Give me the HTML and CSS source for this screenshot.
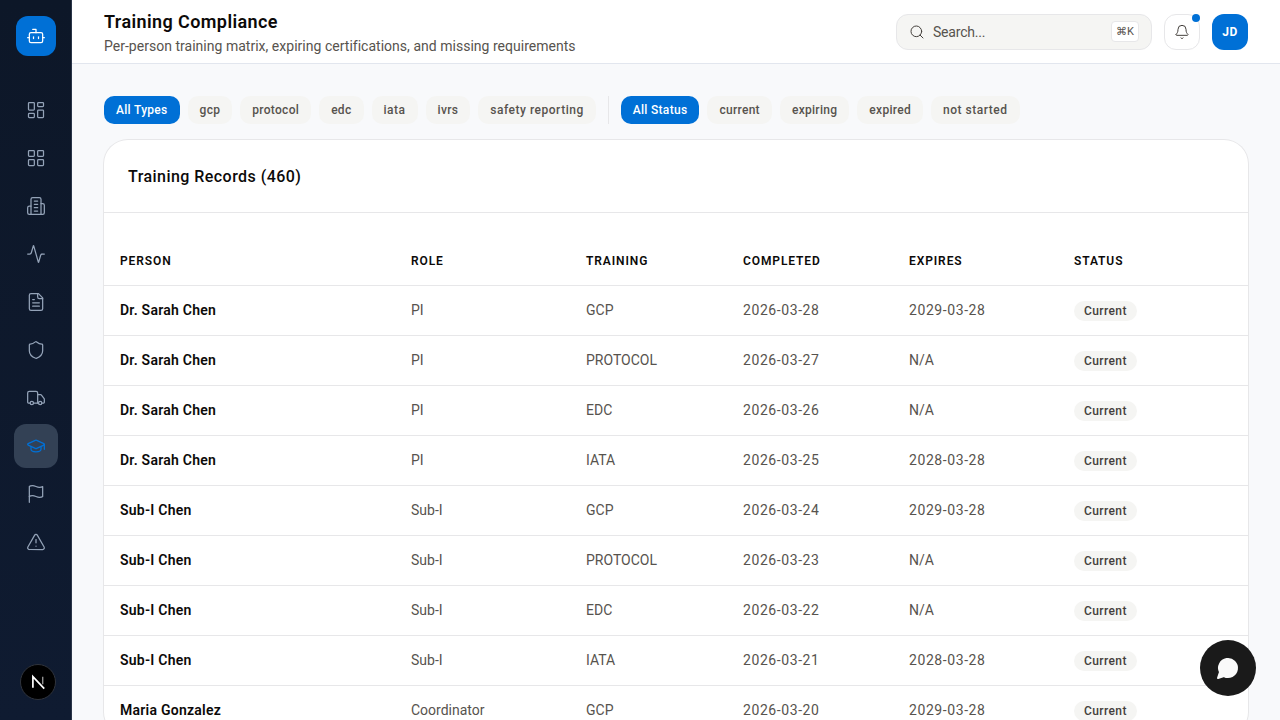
FILE: index.html
```html
<!DOCTYPE html>
<html lang="en">
<head>
    <meta charset="UTF-8">
    <meta name="viewport" content="width=device-width, initial-scale=1.0">
    <title>Training Compliance</title>
    <link rel="stylesheet" href="styles.css">
</head>
<body>
    <div class="app">
        <aside class="sidebar">
            <div class="logo">
                <svg class="icon" viewBox="0 0 24 24"><path d="M12 8V4H8"/><rect width="16" height="12" x="4" y="8" rx="2"/><path d="M2 14h2"/><path d="M20 14h2"/><path d="M15 13v2"/><path d="M9 13v2"/></svg>
            </div>
            <nav class="nav">
                <a class="nav-item"><svg class="icon" viewBox="0 0 24 24"><rect width="7" height="9" x="3" y="3" rx="1"/><rect width="7" height="5" x="14" y="3" rx="1"/><rect width="7" height="9" x="14" y="12" rx="1"/><rect width="7" height="5" x="3" y="16" rx="1"/></svg></a>
                <a class="nav-item"><svg class="icon" viewBox="0 0 24 24"><rect width="7" height="7" x="3" y="3" rx="1"/><rect width="7" height="7" x="14" y="3" rx="1"/><rect width="7" height="7" x="14" y="14" rx="1"/><rect width="7" height="7" x="3" y="14" rx="1"/></svg></a>
                <a class="nav-item"><svg class="icon" viewBox="0 0 24 24"><path d="M6 22V4a2 2 0 0 1 2-2h8a2 2 0 0 1 2 2v18Z"/><path d="M6 12H4a2 2 0 0 0-2 2v6a2 2 0 0 0 2 2h2"/><path d="M18 9h2a2 2 0 0 1 2 2v9a2 2 0 0 1-2 2h-2"/><path d="M10 6h4"/><path d="M10 10h4"/><path d="M10 14h4"/><path d="M10 18h4"/></svg></a>
                <a class="nav-item"><svg class="icon" viewBox="0 0 24 24"><path d="M22 12h-2.48a2 2 0 0 0-1.93 1.46l-2.35 8.36a.25.25 0 0 1-.48 0L9.24 2.18a.25.25 0 0 0-.48 0l-2.35 8.36A2 2 0 0 1 4.49 12H2"/></svg></a>
                <a class="nav-item"><svg class="icon" viewBox="0 0 24 24"><path d="M15 2H6a2 2 0 0 0-2 2v16a2 2 0 0 0 2 2h12a2 2 0 0 0 2-2V7Z"/><path d="M14 2v4a2 2 0 0 0 2 2h4"/><path d="M10 9H8"/><path d="M16 13H8"/><path d="M16 17H8"/></svg></a>
                <a class="nav-item"><svg class="icon" viewBox="0 0 24 24"><path d="M20 13c0 5-3.5 7.5-7.66 8.95a1 1 0 0 1-.67-.01C7.5 20.5 4 18 4 13V6a1 1 0 0 1 1-1c2 0 4.5-1.2 6.24-2.72a1.17 1.17 0 0 1 1.52 0C14.51 3.81 17 5 19 5a1 1 0 0 1 1 1z"/></svg></a>
                <a class="nav-item"><svg class="icon" viewBox="0 0 24 24"><path d="M14 18V6a2 2 0 0 0-2-2H4a2 2 0 0 0-2 2v11a1 1 0 0 0 1 1h2"/><path d="M15 18H9"/><path d="M19 18h2a1 1 0 0 0 1-1v-3.65a1 1 0 0 0-.22-.624l-3.48-4.35A1 1 0 0 0 17.52 8H14"/><circle cx="17" cy="18" r="2"/><circle cx="7" cy="18" r="2"/></svg></a>
                <a class="nav-item active"><svg class="icon" viewBox="0 0 24 24"><path d="M21.42 10.922a1 1 0 0 0-.019-1.838L12.83 5.18a2 2 0 0 0-1.66 0L2.6 9.08a1 1 0 0 0 0 1.832l8.57 3.908a2 2 0 0 0 1.66 0z"/><path d="M22 10v6"/><path d="M6 12.5V16a6 3 0 0 0 12 0v-3.5"/></svg></a>
                <a class="nav-item"><svg class="icon" viewBox="0 0 24 24"><path d="M4 15s1-1 4-1 5 2 8 2 4-1 4-1V3s-1 1-4 1-5-2-8-2-4 1-4 1z"/><path d="M4 22v-7"/></svg></a>
                <a class="nav-item"><svg class="icon" viewBox="0 0 24 24"><path d="m21.73 18-8-14a2 2 0 0 0-3.48 0l-8 14A2 2 0 0 0 4 21h16a2 2 0 0 0 1.73-3"/><path d="M12 9v4"/><path d="M12 17h.01"/></svg></a>
            </nav>
        </aside>

        <div class="main">
            <header class="header">
                <div class="header-text">
                    <h1>Training Compliance</h1>
                    <p>Per-person training matrix, expiring certifications, and missing requirements</p>
                </div>
                <div class="header-actions">
                    <div class="search">
                        <svg class="icon" viewBox="0 0 24 24"><path d="m21 21-4.34-4.34"/><circle cx="11" cy="11" r="8"/></svg>
                        <span class="search-label">Search...</span>
                        <span class="kbd">⌘K</span>
                    </div>
                    <button class="bell-btn">
                        <svg class="icon" viewBox="0 0 24 24"><path d="M10.268 21a2 2 0 0 0 3.464 0"/><path d="M3.262 15.326A1 1 0 0 0 4 17h16a1 1 0 0 0 .74-1.673C19.41 13.956 18 12.499 18 8A6 6 0 0 0 6 8c0 4.499-1.411 5.956-2.738 7.326"/></svg>
                        <span class="bell-dot"></span>
                    </button>
                    <div class="avatar">JD</div>
                </div>
            </header>

            <main class="content">
                <div class="filters">
                    <button class="chip active">All Types</button>
                    <button class="chip">gcp</button>
                    <button class="chip">protocol</button>
                    <button class="chip">edc</button>
                    <button class="chip chip-wide">iata</button>
                    <button class="chip">ivrs</button>
                    <button class="chip chip-wide">safety reporting</button>
                    <span class="filter-divider"></span>
                    <button class="chip active">All Status</button>
                    <button class="chip">current</button>
                    <button class="chip">expiring</button>
                    <button class="chip">expired</button>
                    <button class="chip chip-wide">not started</button>
                </div>

                <section class="card">
                    <div class="card-header">
                        <h2>Training Records (460)</h2>
                    </div>
                    <div class="table-wrap">
                        <table class="records">
                            <colgroup>
                                <col class="col-person">
                                <col class="col-role">
                                <col class="col-training">
                                <col class="col-completed">
                                <col class="col-expires">
                                <col class="col-status">
                            </colgroup>
                            <thead>
                                <tr>
                                    <th>Person</th>
                                    <th>Role</th>
                                    <th>Training</th>
                                    <th>Completed</th>
                                    <th>Expires</th>
                                    <th>Status</th>
                                </tr>
                            </thead>
                            <tbody>
                                <tr><td class="person">Dr. Sarah Chen</td><td>PI</td><td>GCP</td><td class="date">2026-03-28</td><td class="date">2029-03-28</td><td><span class="pill">Current</span></td></tr>
                                <tr><td class="person">Dr. Sarah Chen</td><td>PI</td><td>PROTOCOL</td><td class="date">2026-03-27</td><td>N/A</td><td><span class="pill">Current</span></td></tr>
                                <tr><td class="person">Dr. Sarah Chen</td><td>PI</td><td>EDC</td><td class="date">2026-03-26</td><td>N/A</td><td><span class="pill">Current</span></td></tr>
                                <tr><td class="person">Dr. Sarah Chen</td><td>PI</td><td>IATA</td><td class="date">2026-03-25</td><td class="date">2028-03-28</td><td><span class="pill">Current</span></td></tr>
                                <tr><td class="person">Sub-I Chen</td><td>Sub-I</td><td>GCP</td><td class="date">2026-03-24</td><td class="date">2029-03-28</td><td><span class="pill">Current</span></td></tr>
                                <tr><td class="person">Sub-I Chen</td><td>Sub-I</td><td>PROTOCOL</td><td class="date">2026-03-23</td><td>N/A</td><td><span class="pill">Current</span></td></tr>
                                <tr><td class="person">Sub-I Chen</td><td>Sub-I</td><td>EDC</td><td class="date">2026-03-22</td><td>N/A</td><td><span class="pill">Current</span></td></tr>
                                <tr><td class="person">Sub-I Chen</td><td>Sub-I</td><td>IATA</td><td class="date">2026-03-21</td><td class="date">2028-03-28</td><td><span class="pill">Current</span></td></tr>
                                <tr><td class="person">Maria Gonzalez</td><td>Coordinator</td><td>GCP</td><td class="date">2026-03-20</td><td class="date">2029-03-28</td><td><span class="pill">Current</span></td></tr>
                            </tbody>
                        </table>
                    </div>
                </section>
            </main>
        </div>
    </div>

    <div class="next-badge">
        <svg viewBox="0 0 36 36" class="next-mark"><path d="M12.6 24V12.4L24.6 25"/><path class="next-stem" d="M23 12.4v8"/></svg>
    </div>

    <button class="chat-btn">
        <svg viewBox="0 0 24 24"><path d="M7.9 20A9 9 0 1 0 4 16.1L2 22Z"/></svg>
    </button>
</body>
</html>
```

FILE: styles.css
```css
:root {
    --primary: #0070d6;
    --border: #e7e7e9;
    --page: #f8f9fb;
    --chip: #f5f5f3;
    --text: #0c0a09;
    --muted: #57534e;
}

* {
    box-sizing: border-box;
}

html, body {
    height: 100%;
}

body {
    margin: 0;
    overflow: hidden;
    font-family: "Roboto", "Noto Sans", sans-serif;
    color: var(--text);
    background: var(--page);
}

.icon {
    width: 20px;
    height: 20px;
    fill: none;
    stroke: currentColor;
    stroke-width: 1.5;
    stroke-linecap: round;
    stroke-linejoin: round;
    flex-shrink: 0;
}

.app {
    display: flex;
    height: 100vh;
}

.sidebar {
    width: 72px;
    flex-shrink: 0;
    display: flex;
    flex-direction: column;
    align-items: center;
    padding-top: 16px;
    background: linear-gradient(180deg, #0d1728, #0f1b31);
    box-shadow: inset -1px 0 0 #2a3548;
}

.logo {
    width: 40px;
    height: 40px;
    border-radius: 12px;
    background: var(--primary);
    color: #fff;
    display: flex;
    align-items: center;
    justify-content: center;
    margin-bottom: 32px;
}

.nav {
    display: flex;
    flex-direction: column;
    gap: 4px;
}

.nav-item {
    width: 44px;
    height: 44px;
    border-radius: 12px;
    display: flex;
    align-items: center;
    justify-content: center;
    color: #94a3b8;
}

.nav-item.active {
    background: #334155;
    color: var(--primary);
}

/* dev indicator, sits over the sidebar */
.next-badge {
    position: fixed;
    left: 20px;
    bottom: 20px;
    width: 36px;
    height: 36px;
    border-radius: 50%;
    background: #000;
    border: 1px solid #30343c;
}

.next-mark {
    display: block;
    width: 34px;
    height: 34px;
    fill: none;
    stroke: #fff;
    stroke-width: 1.8;
}

.next-stem {
    stroke-width: 1.4;
    opacity: 0.6;
}

.main {
    flex-grow: 1;
    min-width: 0;
    display: flex;
    flex-direction: column;
}

.header {
    height: 64px;
    flex-shrink: 0;
    display: flex;
    align-items: center;
    justify-content: space-between;
    padding: 0 32px;
    background: #fff;
    border-bottom: 1px solid #e2e6ee;
}

.header h1 {
    margin: 0;
    font-size: 18px;
    line-height: 28px;
    font-weight: 600;
    letter-spacing: 0.4px;
}

.header p {
    margin: 0;
    font-size: 14px;
    line-height: 20px;
    letter-spacing: 0.02px;
    color: var(--muted);
}

.header-actions {
    display: flex;
    align-items: center;
    gap: 12px;
}

.search {
    width: 256px;
    height: 36px;
    display: flex;
    align-items: center;
    gap: 8px;
    padding: 0 12px;
    background: var(--chip);
    border: 1px solid var(--border);
    border-radius: 12px;
    color: var(--muted);
    font-size: 14px;
}

.search .icon {
    width: 16px;
    height: 16px;
    color: #44403c;
}

.search-label {
    flex-grow: 1;
    letter-spacing: -0.2px;
}

.kbd {
    height: 21px;
    padding: 0 4px;
    display: flex;
    align-items: center;
    background: #fff;
    border: 1px solid var(--border);
    border-radius: 4px;
    font-size: 11px;
}

.bell-btn {
    position: relative;
    width: 36px;
    height: 36px;
    padding: 0;
    display: flex;
    align-items: center;
    justify-content: center;
    background: #fff;
    border: 1px solid var(--border);
    border-radius: 12px;
    color: #44403c;
}

.bell-btn .icon {
    width: 16px;
    height: 16px;
}

.bell-dot {
    position: absolute;
    top: -1px;
    right: -1px;
    width: 8px;
    height: 8px;
    border-radius: 50%;
    background: var(--primary);
}

.avatar {
    width: 36px;
    height: 36px;
    border-radius: 12px;
    background: var(--primary);
    color: #fff;
    display: flex;
    align-items: center;
    justify-content: center;
    font-size: 12px;
    font-weight: 700;
    letter-spacing: 0.5px;
}

.content {
    padding: 32px;
    flex-grow: 1;
    min-height: 0;
}

.filters {
    display: flex;
    align-items: center;
    gap: 8px;
    margin-bottom: 16px;
}

.chip {
    height: 28px;
    padding: 0 12px;
    border: none;
    border-radius: 10px;
    background: var(--chip);
    color: var(--muted);
    font: inherit;
    font-size: 12px;
    font-weight: 500;
    letter-spacing: 0.3px;
    white-space: nowrap;
}

.chip-wide {
    letter-spacing: 0.52px;
}

.chip.active {
    background: var(--primary);
    color: #fff;
}

.filter-divider {
    width: 1px;
    height: 28px;
    margin: 0 4px;
    background: var(--border);
}

.card {
    background: #fff;
    box-shadow: 0 0 0 1px var(--border);
    border-radius: 24px;
}

.card-header {
    height: 73px;
    padding: 0 24px;
    display: flex;
    align-items: center;
    border-bottom: 1px solid var(--border);
}

.card-header h2 {
    margin: 0;
    font-size: 16px;
    font-weight: 500;
    letter-spacing: 0.45px;
}

.table-wrap {
    padding-top: 22px;
}

.records {
    width: 100%;
    table-layout: fixed;
    border-collapse: collapse;
}

.col-person { width: 291px; }
.col-role { width: 175px; }
.col-training { width: 157px; }
.col-completed { width: 166px; }
.col-expires { width: 165px; }
.col-status { width: 190px; }

.records th {
    height: 50px;
    padding: 2px 16px 0;
    text-align: left;
    font-size: 12px;
    font-weight: 600;
    letter-spacing: 0.9px;
    text-transform: uppercase;
    border-bottom: 1px solid var(--border);
}

.records td {
    height: 50px;
    padding: 0 16px;
    font-size: 14px;
    color: var(--muted);
    border-bottom: 1px solid var(--border);
}

.records td.person {
    color: var(--text);
    font-weight: 600;
    letter-spacing: 0.25px;
}

.records td.date {
    letter-spacing: 0.58px;
}

.pill {
    display: inline-block;
    height: 20px;
    padding: 0 10px;
    line-height: 20px;
    vertical-align: -2px;
    border-radius: 10px;
    background: var(--chip);
    font-size: 12px;
    font-weight: 500;
    letter-spacing: 0.4px;
    color: #44403c;
}

.chat-btn {
    position: fixed;
    right: 24px;
    bottom: 24px;
    width: 56px;
    height: 56px;
    padding: 0;
    border: none;
    border-radius: 50%;
    background: #1a1a1a;
    display: flex;
    align-items: center;
    justify-content: center;
}

.chat-btn svg {
    width: 24px;
    height: 24px;
    fill: #fafafa;
    stroke: #fafafa;
    stroke-width: 2;
    stroke-linejoin: round;
}
```
